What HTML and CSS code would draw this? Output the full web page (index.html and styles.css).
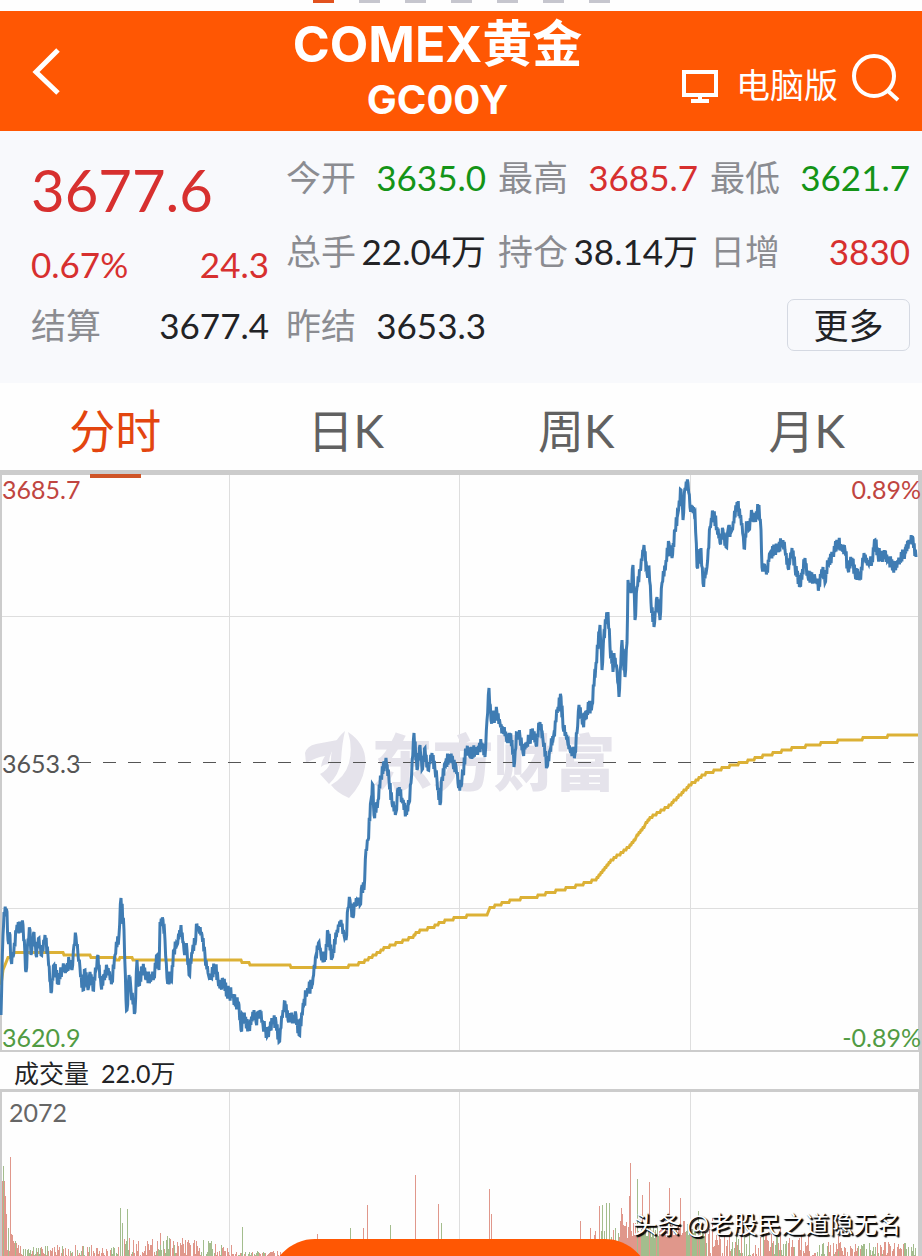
FILE: index.html
```html
<!DOCTYPE html>
<html lang="zh-CN">
<head>
	<meta charset="utf-8">
	<meta name="viewport" content="width=device-width, initial-scale=1">
	<title>COMEX黄金 GC00Y</title>
	<link rel="stylesheet" href="styles.css">
</head>
<body>

	<div class="pager">
		<span class="on"></span><span></span><span></span><span></span><span></span><span></span><span></span>
	</div>

	<header class="topbar">
		<button class="back" aria-label="返回">
			<svg width="30" height="50" viewBox="0 0 30 50"><path d="M26 4 L4 26 L26 47" /></svg>
		</button>
		<div class="title">
			<h1>COMEX黄金</h1>
			<h2>GC00Y</h2>
		</div>
		<div class="tools">
			<a class="desktop" href="#">
				<svg width="36" height="42" viewBox="0 -8 36 42"><path d="M2 2 H34 V25 H2 Z M18 25 V31 M9 31 H27" /></svg>
				<span>电脑版</span>
			</a>
			<button class="search" aria-label="搜索">
				<svg width="50" height="50" viewBox="0 0 50 50"><circle cx="23" cy="23" r="20" /><path d="M37 38 L47 47" /></svg>
			</button>
		</div>
	</header>

	<section class="quote">
		<div class="now">
			<div class="price red">3677.6</div>
			<div class="change red"><span>0.67%</span><span>24.3</span></div>
			<dl class="pair"><dt>结算</dt><dd>3677.4</dd></dl>
		</div>
		<div class="stats">
			<dl class="pair"><dt>今开</dt><dd class="green">3635.0</dd></dl>
			<dl class="pair"><dt>最高</dt><dd class="red">3685.7</dd></dl>
			<dl class="pair"><dt>最低</dt><dd class="green">3621.7</dd></dl>
			<dl class="pair"><dt>总手</dt><dd>22.04万</dd></dl>
			<dl class="pair"><dt>持仓</dt><dd>38.14万</dd></dl>
			<dl class="pair"><dt>日增</dt><dd class="red">3830</dd></dl>
			<dl class="pair"><dt>昨结</dt><dd>3653.3</dd></dl>
			<button class="more">更多</button>
		</div>
	</section>

	<nav class="tabs">
		<a class="active" href="#">分时</a>
		<a href="#">日K</a>
		<a href="#">周K</a>
		<a href="#">月K</a>
	</nav>

	<section class="chart">
		<svg class="plot" viewBox="0 0 922 582" preserveAspectRatio="none">
			<g class="grid">
				<path d="M229.5 5 V580 M459.5 5 V580 M690.5 5 V580" />
				<path d="M2 146.5 H918 M2 438.5 H918" />
			</g>
		</svg>
		<div class="brand">
			<svg width="62" height="68" viewBox="0 0 62 68">
				<path d="M1 22 Q3 15 12 13 L39 8 Q25 18 25 33 Q20 33 17 36 Q18 29 21 25 Q13 26 2 32 Z" />
				<path d="M41 0 Q27 12 27 28 Q26 38 16 43 L25 53 Q35 44 37 30 Q38 12 41 0 Z" />
				<path d="M44 1 Q64 14 61 36 Q58 54 45 67 Q33 62 27 54 Q41 46 45 32 Q49 17 44 1 Z" />
			</svg>
			<span>东方财富</span>
		</div>
		<svg class="plot" viewBox="0 0 922 582" preserveAspectRatio="none">
			<path class="base" d="M78 292.5 H914" />
			<polyline id="avg" />
			<polyline id="line" />
		</svg>
		<span class="label top left red">3685.7</span>
		<span class="label top right red">0.89%</span>
		<span class="label middle left">3653.3</span>
		<span class="label bottom left green">3620.9</span>
		<span class="label bottom right green">-0.89%</span>
	</section>

	<div class="volume-title"><span>成交量</span><span>22.0万</span></div>

	<section class="volume">
		<svg class="plot" viewBox="0 0 922 167" preserveAspectRatio="none">
			<path class="grid" d="M229.5 3 V167 M459.5 3 V167 M690.5 3 V167" />
			<path id="up" />
			<path id="down" />
		</svg>
		<span class="volume-max">2072</span>
		<a class="trade" href="#" aria-label="交易"></a>
		<span class="credit">头条 @老股民之道隐无名</span>
	</section>

	<script src="chart.js"></script>
</body>
</html>
```
FILE: styles.css
```css
* { box-sizing: border-box; }
body { margin: 0; min-height: 100vh; display: flex; flex-direction: column; overflow-x: hidden; background: #fefefe; color: #222326; font-family: Lato, "Noto Sans CJK SC", sans-serif; }
h1, h2, dl, dd { margin: 0; }
button { border: none; background: none; padding: 0; font: inherit; color: inherit; }
a { color: inherit; text-decoration: none; }
svg { display: block; fill: none; }

.red { color: #d7302f; }
.green { color: #149417; }

.pager { height: 11px; display: flex; justify-content: center; gap: 25px; }
.pager span { width: 21px; height: 3px; background: #c6c6ce; }
.pager .on { background: #e2521e; }

.topbar { height: 120px; padding: 0 21px 0 32px; display: grid; grid-template-columns: 161px 1fr auto; background: #ff5703; color: #fff; }
.topbar svg { stroke: #fff; stroke-width: 4; }
.back { justify-self: start; }
.back svg { stroke-width: 5; }
.title { text-align: center; font-family: Inter, "Noto Sans CJK SC", sans-serif; }
.title h1 { font-size: 50px; line-height: 66px; font-weight: 700; }
.title h2 { font-size: 40px; line-height: 46px; font-weight: 700; }
.tools { display: flex; align-items: center; gap: 13px; padding-top: 14px; }
.desktop { display: flex; align-items: center; gap: 18px; font-size: 34px; padding-top: 10px; }

.quote { display: flex; gap: 17px; padding: 9px 12px 21px 31px; background: #f8f9fc; font-size: 35px; }
.now { flex: 238; }
.price { font-size: 58px; line-height: 100px; }
.change { display: flex; justify-content: space-between; line-height: 48px; }
.pair { display: flex; justify-content: space-between; line-height: 74px; white-space: nowrap; }
.pair dt { color: #8b8c91; }
.stats { flex: 624; display: grid; grid-template-columns: repeat(3, 1fr); column-gap: 12px; }
.more { grid-column: 3; justify-self: end; align-self: center; width: 123px; height: 52px; border: 1px solid #d5d9e2; border-radius: 7px; line-height: 48px; }

.tabs { display: grid; grid-template-columns: repeat(4, 1fr); height: 87px; line-height: 96px; font-size: 46px; text-align: center; color: #616161; }
.tabs a { position: relative; height: 87px; }
.tabs .active { color: #e3450f; }
.tabs .active::after { content: ""; position: absolute; z-index: 1; left: 50%; bottom: -8px; width: 51px; height: 4px; margin-left: -25px; background: #cf5427; }

.chart { position: relative; height: 582px; border: solid #ccc; border-width: 5px 4px 2px 2px; }
.plot { position: absolute; left: -2px; top: -5px; width: calc(100% + 6px); height: 582px; }
.grid { stroke: #dedede; stroke-width: 1; }
.base { stroke: #555; stroke-width: 1; stroke-dasharray: 13 12; }
#avg { stroke: #dcb136; stroke-width: 3; }
#line { stroke: #3f7cb3; stroke-width: 3; }

.brand { position: absolute; left: 0; right: 0; top: 256px; display: flex; justify-content: center; gap: 5px; color: #e5e3eb; font-size: 61px; line-height: 64px; font-weight: 900; }
.brand svg { fill: #e5e3eb; }

.label { position: absolute; font-size: 25px; line-height: 28px; color: #555; }
.label.red { color: #c04540; }
.label.green { color: #519b43; }
.top { top: 0; }
.middle { top: 274px; }
.bottom { bottom: -1px; }
.left { left: 0; }
.right { right: -3px; }

.volume-title { height: 37px; padding-left: 14px; display: flex; gap: 12px; font-size: 25px; line-height: 42px; border-right: 3px solid #ccc; }

.volume { position: relative; flex: 1; min-height: 167px; overflow: hidden; border: solid #ccc; border-width: 3px 4px 0 2px; }
.volume .plot { top: -3px; height: 167px; }
.volume-max { position: absolute; left: 7px; top: 5px; font-size: 25px; line-height: 30px; color: #666; }
#up { stroke: #e0978b; }
#down { stroke: #a3bd8d; }
.trade { position: absolute; left: 50%; bottom: -73px; width: 380px; height: 90px; margin-left: -190px; border-radius: 45px; background: #ff5703; }
.credit { position: absolute; right: 17px; bottom: 15px; font-family: "Noto Sans CJK SC", sans-serif; font-size: 24px; line-height: 36px; color: #fff; text-shadow: 1px 1px 1px #000, 2px 2px 1px #000; }
```
FILE: chart.js
```js
var price = '1,1015 3,935 4,912 7,912 8,940 10,935 11,960 13,957 17,925 20,928 23,925 25,955 26,972 28,940 30,930 31,955 34,932 36,955 39,938 41,955 45,935 48,955 51,993 54,965 58,982 62,968 66,970 70,960 72,970 74,945 76,937 78,955 80,968 83,990 85,970 88,990 90,972 93,990 96,970 98,955 101,985 104,975 107,968 112,980 115,955 119,935 121,898 124,930 126,1000 127,1010 129,975 131,990 135,1012 137,960 139,985 142,968 146,975 150,980 154,975 157,955 159,970 160,922 163,920 165,940 167,978 171,978 174,950 177,945 181,925 184,950 187,950 189,975 193,945 195,945 197,925 199,930 202,935 205,955 208,973 211,978 215,965 218,980 221,988 223,980 227,992 232,995 236,1002 239,1005 241,1030 243,1015 249,1028 254,1010 256,1022 260,1010 263,1025 268,1035 273,1020 276,1022 279,1042 283,1010 285,1002 288,1020 293,1018 296,1015 299,1035 303,1005 306,995 308,990 312,985 313,978 316,955 319,942 321,955 325,958 328,932 332,958 337,930 341,920 344,935 346,940 348,908 350,900 353,918 355,905 358,900 360,905 362,885 364,890 366,850 368,840 371,800 373,785 374,815 378,800 381,777 386,758 389,780 392,803 396,812 398,788 402,798 406,812 409,803 411,783 414,733 417,770 420,745 422,770 425,748 428,770 432,753 435,770 437,780 440,805 442,777 445,763 450,757 453,763 456,767 458,783 461,787 463,773 466,750 470,752 477,752 482,743 485,757 487,720 489,688 491,720 497,713 500,723 503,730 507,737 512,740 514,767 517,733 520,737 523,753 527,742 533,733 536,745 540,722 543,740 547,767 550,750 554,733 558,707 561,697 563,727 567,737 570,750 575,753 577,733 579,705 583,723 587,710 592,705 596,663 600,625 602,670 604,633 608,612 610,647 613,672 614,653 617,670 619,697 622,640 625,677 627,643 628,580 631,593 633,565 635,620 637,587 640,570 644,545 647,573 649,567 651,603 654,627 657,597 660,620 662,583 666,560 669,543 672,558 675,530 678,513 681,490 683,520 685,488 688,483 690,507 695,513 697,567 701,548 703,583 707,567 710,527 713,513 717,527 720,543 723,530 726,547 728,530 732,530 737,502 742,523 744,548 747,523 749,530 752,513 755,520 759,505 761,530 762,567 767,570 770,553 775,550 778,550 783,540 785,550 788,568 792,548 795,567 800,585 805,558 808,577 815,578 819,585 823,567 825,583 828,563 833,552 838,543 845,550 848,570 852,558 855,573 860,577 864,553 868,563 872,560 875,540 878,555 883,555 888,560 895,567 900,560 905,552 910,540 913,538 916,557',
	average = '1,985 3,970 8,958 15,953 55,953 88,956 118,959 130,957 134,960 238,960 253,965 290,966 292,967 345,967 362,963 370,958 385,948 413,937 417,932 433,927 442,922 460,917 487,914 490,908 503,903 518,899 535,897 548,893 573,887 595,880 612,860 630,846 650,818 670,805 690,785 705,774 730,766 745,762 760,757 790,749 830,742 870,738 900,735 918,735',
	// tallest volume bars: x, height, direction
	spikes = [[2,75,1],[3,90,0],[4,75,1],[5,60,1],[6,42,1],[8,28,0],[10,99,1],[12,21,1],[15,15,0],[120,48,0],[122,33,0],[127,47,0],[129,18,1],[160,23,1],[167,20,0],[182,18,1],[242,29,0],[317,22,1],[350,28,0],[363,28,1],[367,51,1],[390,31,0],[415,81,1],[438,52,1],[441,33,0],[489,67,1],[491,42,1],[580,35,1],[599,50,1],[602,51,0],[606,53,0],[609,53,0],[621,48,1],[622,42,1],[629,60,1],[630,93,1],[637,77,0],[642,61,1],[649,74,1],[669,68,1],[680,58,1],[698,45,0],[712,38,1],[763,36,0],[780,28,1],[838,20,1]],
	seed = 7;

function rand(){
	seed = (seed * 16807) % 2147483647;
	return seed / 2147483647;
}

function parse(str){
	return str.split(' ').map(function(p){
		var xy = p.split(',');
		return [+xy[0], xy[1] - 470];
	});
}

// fill the gaps between two ticks with small moves
function jitter(pts, size){
	var out = [];
	pts.forEach(function(p, i){
		out.push(p);
		var next = pts[i + 1];
		if( !next ) return;
		var steps = Math.max(1, Math.round((next[0] - p[0]) * 1.5));
		for( var s = 1; s < steps; s++ ){
			out.push([
				p[0] + (next[0] - p[0]) * s / steps,
				p[1] + (next[1] - p[1]) * s / steps + (s % 2 ? 1 : -1) * (0.2 + rand() * 0.8) * size
			]);
		}
	});
	return out;
}

// the average moves in price ticks
function stepped(pts){
	var out = [];
	pts.forEach(function(p, i){
		var next = pts[i + 1];
		if( !next ) return;
		for( var x = p[0]; x <= next[0]; x++ ){
			var y = p[1] + (next[1] - p[1]) * (x - p[0]) / (next[0] - p[0]);
			out.push([x, Math.round(y / 2.5) * 2.5]);
		}
	});
	return out;
}

function volumeBase(x){
	if( x < 20 ) return 36 - x;
	if( x < 120 ) return 11;
	if( x < 215 ) return 18;
	if( x < 232 ) return 12;
	if( x < 300 ) return 5;
	if( x < 590 ) return 14;
	if( x < 620 ) return 30;
	if( x < 710 ) return 36;
	if( x < 810 ) return 24;
	return 14;
}

document.getElementById('line').setAttribute('points', jitter(parse(price), 7).join(' '));
document.getElementById('avg').setAttribute('points', stepped(parse(average)).join(' '));

var bars = { up: '', down: '' };
function addBar(x, h, up){
	bars[up ? 'up' : 'down'] += 'M' + (x + 0.5) + ' 167 v' + -Math.round(h);
}
for( var x = 2; x < 916; x++ ){
	var base = volumeBase(x), solid = x > 618 && x < 706;
	if( solid || rand() > 0.2 ){
		addBar(x, base * (solid ? 0.5 + rand() * 0.5 : rand()), Math.sin(x / 7) + rand() * 2 > 0.6);
	}
}
spikes.forEach(function(s){ addBar(s[0], s[1], s[2]); });
document.getElementById('up').setAttribute('d', bars.up);
document.getElementById('down').setAttribute('d', bars.down);
```
